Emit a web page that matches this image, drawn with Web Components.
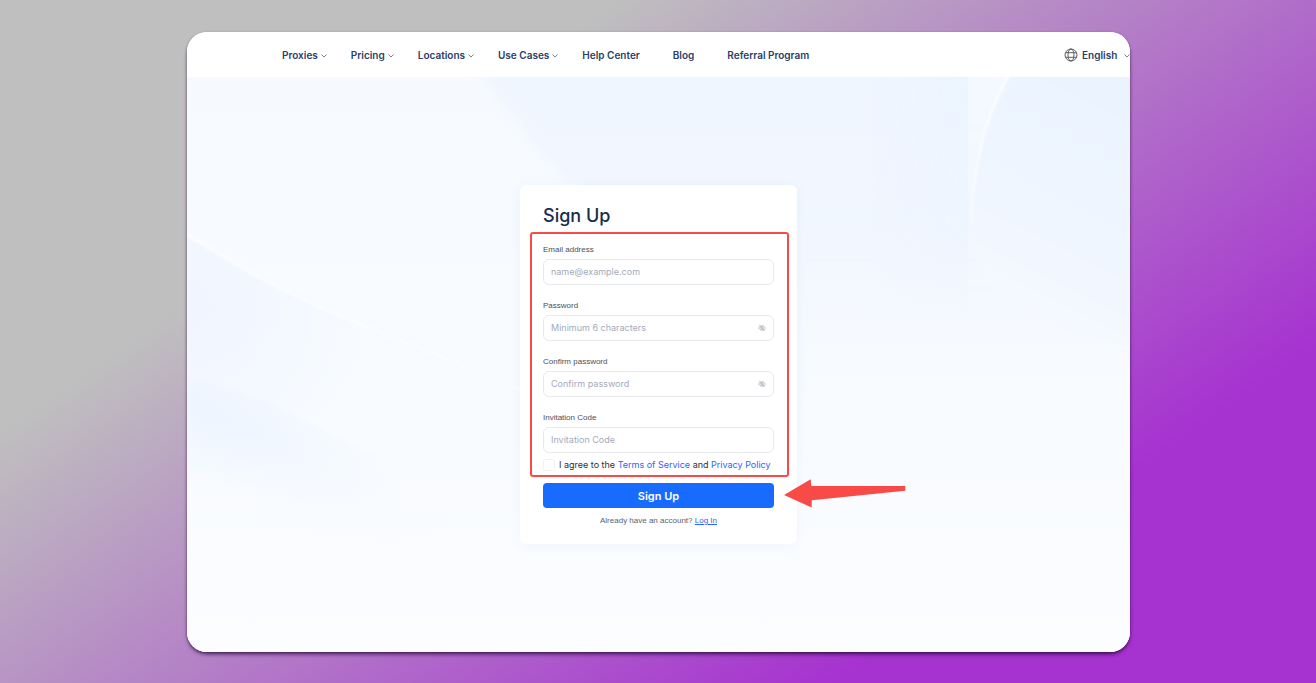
<!DOCTYPE html>
<html lang="en">
<head>
<meta charset="utf-8">
<title>Sign Up</title>
<style>
  body { margin: 0; font-family: Inter, "Liberation Sans", sans-serif; }
</style>
</head>
<body>
<sign-up-page></sign-up-page>
<script>
class BaseElement extends HTMLElement {
  constructor() {
    super();
    this.attachShadow({ mode: "open" }).innerHTML =
      "<style>*{box-sizing:border-box}</style>" + this.view();
  }
}

class ChevronIcon extends BaseElement {
  view() {
    return `<style>:host{display:block;width:6px;height:6px;color:#75839a}svg{display:block}</style>
      <svg width="6" height="6" viewBox="0 0 6 6" fill="none" stroke="currentColor" stroke-width="1"><path d="M.5 2.500 3 5 5.500 2.500"/></svg>`;
  }
}

class NavItem extends BaseElement {
  view() {
    const menu = this.hasAttribute("menu");
    const tag = menu ? "button type='button' aria-haspopup='true'" : "a href='#'";
    return `<style>
        :host{display:block}
        button,a{display:flex;align-items:center;gap:3px;border:0;padding:0;background:none;
          font:600 10px/16px Inter,"Liberation Sans",sans-serif;color:#2a4069;text-decoration:none;white-space:nowrap}
        .space{width:6px}
      </style>
      <${tag}><slot></slot>${menu ? "<chevron-icon></chevron-icon>" : "<span class='space'></span>"}</${menu ? "button" : "a"}>`;
  }
}

class LanguagePicker extends BaseElement {
  view() {
    return `<style>
        :host{display:flex;align-items:center;gap:4px;flex:none}
        svg{display:block}
        label{display:flex}
        select{appearance:none;border:0;padding:0;background:none;width:38px;height:16px;
          font:600 10px/16px Inter,"Liberation Sans",sans-serif;color:#2a4069}
      </style>
      <label for="lang" aria-label="Language"><svg width="14" height="14" viewBox="0 0 14 14" fill="none" stroke="#4d4f55" stroke-width=".9">
        <circle cx="7" cy="7" r="6"/><ellipse cx="7" cy="7" rx="3" ry="6"/>
        <path d="M1.500 4.700h11M1.500 9.300h11"/></svg></label>
      <select id="lang"><option>English</option></select>
      <chevron-icon></chevron-icon>`;
  }
}

class SiteHeader extends BaseElement {
  view() {
    return `<style>
        :host{display:flex;align-items:center;justify-content:space-between;height:45px;padding-left:95px;
          background:#fff;position:relative}
        nav{display:flex;gap:24px}
      </style>
      <nav>
        <nav-item menu>Proxies</nav-item><nav-item menu>Pricing</nav-item>
        <nav-item menu>Locations</nav-item><nav-item menu>Use Cases</nav-item>
        <nav-item>Help Center</nav-item><nav-item>Blog</nav-item><nav-item>Referral Program</nav-item>
      </nav>
      <language-picker></language-picker>`;
  }
}

class FormField extends BaseElement {
  view() {
    const type = this.getAttribute("type") || "text";
    const eye = type === "password" ? `<button type="button" aria-label="Show password">
      <svg width="8" height="8" viewBox="0 0 8 8" fill="none" stroke="#a9acb2" stroke-width=".8">
      <path d="M.5 4Q4 -.5 7.500 4Q4 8.500 .5 4ZM1.300 1l5.400 6"/><circle cx="4" cy="4" r="1.200"/></svg></button>` : "";
    return `<style>
        :host{display:grid;gap:3px}
        label{font:400 8px/12px "Liberation Sans",sans-serif;color:#4a4f58}
        .box{display:flex;align-items:center;height:26px;padding:0 7px;border:1px solid #e8eaee;border-radius:6px;background:#fff}
        input{flex:1;min-width:0;border:0;outline:0;padding:0;background:none;
          font:400 9px/14px Inter,"Liberation Sans",sans-serif;color:#253c66}
        input::placeholder{color:#a3abb9;opacity:1}
        button{border:0;padding:0;background:none;display:block}
        svg{display:block}
      </style>
      <label for="control"><slot></slot></label>
      <div class="box"><input id="control" type="${type}" placeholder="${this.getAttribute("placeholder")}">${eye}</div>`;
  }
}

class MarkerArrow extends BaseElement {
  view() {
    return `<style>:host{display:block;width:122px;height:29px}svg{display:block}</style>
      <svg width="122" height="29" viewBox="0 0 122 29" aria-hidden="true">
      <path fill="#f84a46" d="M0 16 26.700.3 27.300 7H121.300V11.700L27.700 21.300V28.500Z"/></svg>`;
  }
}

class SignUpCard extends BaseElement {
  view() {
    return `<style>
        :host{display:block;position:relative;width:277px;padding:20px 23px 17px;border-radius:6px;background:#fff;
          box-shadow:0 2px 12px rgba(70,120,210,.06)}
        h1{margin:0 0 17px;font-weight:500;font-size:18px;line-height:22px;color:#1b2c4b}
        .fields{position:relative;display:grid;gap:15px}
        .fields::after{content:"";position:absolute;inset:-12px -15px -6px -13px;border:2px solid #f84a46;border-radius:3px;pointer-events:none}
        .last{display:grid;gap:6px}
        .agree{display:flex;align-items:center;gap:4px;font-size:9px;line-height:12px;color:#2c3038;white-space:nowrap}
        .agree input{appearance:none;width:12px;height:12px;margin:0;border:1px solid #eff1f4;border-radius:3px;background:#fff}
        a{color:#2f62ff}
        .agree a{text-decoration:none}
        .action{position:relative;margin-top:12px}
        .action button{display:block;width:100%;height:25px;border:0;border-radius:4px;background:#176bff;
          color:#fff;font:600 11px/16px Inter,"Liberation Sans",sans-serif}
        marker-arrow{position:absolute;left:100%;top:-4px;margin-left:10px}
        p{margin:7px 0 0;font:400 8px/12px "Liberation Sans",sans-serif;text-align:center;color:#5a6272}
      </style>
      <h1>Sign Up</h1>
      <form>
        <div class="fields">
          <form-field type="email" placeholder="name@example.com">Email address</form-field>
          <form-field type="password" placeholder="Minimum 6 characters">Password</form-field>
          <form-field type="password" placeholder="Confirm password">Confirm password</form-field>
          <div class="last">
            <form-field placeholder="Invitation Code">Invitation Code</form-field>
            <div class="agree"><input id="agree" type="checkbox"><label for="agree">I agree to the <a href="#">Terms of Service</a> and <a href="#">Privacy Policy</a></label></div>
          </div>
        </div>
        <div class="action"><button type="submit">Sign Up</button><marker-arrow></marker-arrow></div>
      </form>
      <p>Already have an account? <a href="#">Log In</a></p>`;
  }
}

class WaveBackdrop extends BaseElement {
  view() {
    return `<style>:host{display:block;position:absolute;inset:0}svg{display:block;width:100%;height:100%}</style>
      <svg viewBox="0 0 943 575" preserveAspectRatio="none" aria-hidden="true">
        <defs>
          <linearGradient id="base" x1="0" y1="0" x2="0" y2="1"><stop offset="0" stop-color="#f6faff"/><stop offset=".6" stop-color="#f8fbff"/><stop offset="1" stop-color="#fcfdff"/></linearGradient>
          <linearGradient id="top" x1="0" y1="0" x2="0" y2="1"><stop offset="0" stop-color="#f0f6ff"/><stop offset=".5" stop-color="#f2f7ff"/><stop offset="1" stop-color="#f8fbff" stop-opacity="0"/></linearGradient>
          <linearGradient id="fold" x1="0" y1="0" x2="1" y2="0"><stop offset="0" stop-color="#ebf4ff" stop-opacity="0"/><stop offset="1" stop-color="#ebf4ff"/></linearGradient>
          <linearGradient id="orb" x1=".8" y1="0" x2=".5" y2="1"><stop offset="0" stop-color="#eaf3ff"/><stop offset=".6" stop-color="#f0f6ff"/><stop offset="1" stop-color="#f6faff"/></linearGradient>
          <radialGradient id="left" gradientUnits="userSpaceOnUse" cx="0" cy="230" r="190"><stop offset="0" stop-color="#f0f5ff"/><stop offset="1" stop-color="#f0f5ff" stop-opacity="0"/></radialGradient>
          <radialGradient id="deep" gradientUnits="userSpaceOnUse" cx="0" cy="0" r="1" gradientTransform="translate(20 335) rotate(26) scale(260 75)"><stop offset="0" stop-color="#edf5ff"/><stop offset="1" stop-color="#f3f8ff" stop-opacity="0"/></radialGradient>
          <linearGradient id="fade" x1="0" y1="0" x2="0" y2="1"><stop offset="0" stop-color="#fff"/><stop offset="1" stop-color="#fff" stop-opacity="0"/></linearGradient>
          <filter id="soft" x="-20%" y="-20%" width="140%" height="140%"><feGaussianBlur stdDeviation="6"/></filter>
          <filter id="edge"><feGaussianBlur stdDeviation="1"/></filter>
          <mask id="down" maskUnits="userSpaceOnUse" x="0" y="0" width="943" height="250"><path fill="url(#fade)" d="M0 0H943V250H0Z"/></mask>
        </defs>
        <path fill="url(#base)" d="M0 0H943V575H0Z"/>
        <path fill="url(#top)" filter="url(#soft)" d="M280 -20Q340 60 400 130L600 370H960V-20Z"/>
        <path fill="url(#fold)" mask="url(#down)" d="M680 0H781V250H680Z"/>
        <path fill="#f4f8ff" mask="url(#down)" d="M781 0H830V250H781Z"/>
        <path fill="url(#orb)" filter="url(#edge)" d="M826 -4Q788 60 786 150C788 215 830 250 950 270V-4Z"/>
        <path fill="none" stroke="#f8fbff" stroke-width="3" mask="url(#down)" d="M822 -4Q786 60 784 150"/>
        <path fill="url(#left)" d="M0 157Q100 218 200 258V420H0Z"/>
        <path fill="url(#deep)" d="M0 300Q60 312 120 345T300 425V500H0Z"/>
        <path fill="none" stroke="#fcfdff" stroke-width="3" filter="url(#edge)" d="M-4 155Q90 215 180 250T340 316"/>
      </svg>`;
  }
}

class SignUpPage extends BaseElement {
  view() {
    return `<style>
        :host{box-sizing:border-box;display:flex;min-height:100vh;padding:32px 186px 31px 187px;
          background:linear-gradient(145deg,#bfbfbf 27%,#a632d0 79%)}
        .frame{flex:1;min-width:0;display:flex;border-radius:20px;box-shadow:0 3px 4px -1px rgba(30,0,50,.7),0 1px 3px rgba(30,0,50,.3)}
        .window{flex:1;min-width:0;display:flex;flex-direction:column;border-radius:20px;overflow:hidden;background:#fff}
        main{flex:1;position:relative;display:flex;align-items:center;justify-content:center;padding:40px 0}
      </style>
      <div class="frame"><div class="window">
        <site-header></site-header>
        <main><wave-backdrop></wave-backdrop><sign-up-card></sign-up-card></main>
      </div></div>`;
  }
}

for (const [name, type] of Object.entries({
  "chevron-icon": ChevronIcon, "nav-item": NavItem, "language-picker": LanguagePicker,
  "site-header": SiteHeader, "form-field": FormField, "marker-arrow": MarkerArrow,
  "sign-up-card": SignUpCard, "wave-backdrop": WaveBackdrop, "sign-up-page": SignUpPage
})) customElements.define(name, type);
</script>
</body>
</html>
